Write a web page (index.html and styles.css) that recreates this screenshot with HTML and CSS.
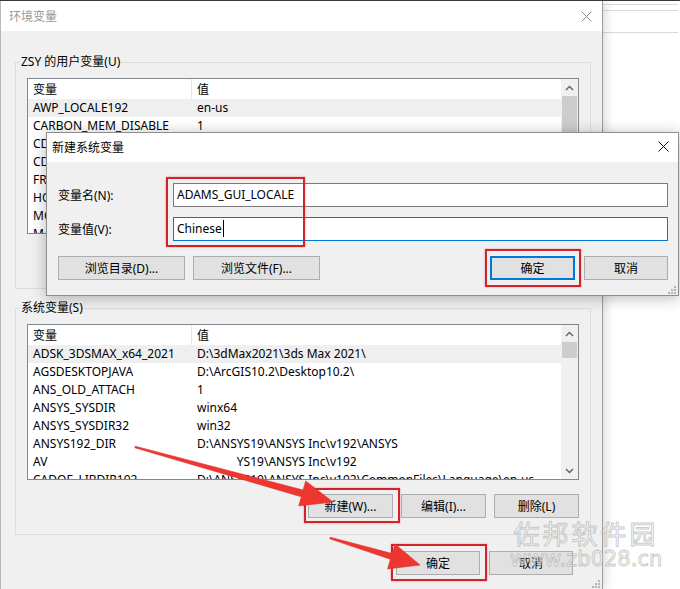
FILE: index.html
```html
<!DOCTYPE html>
<html lang="zh-CN">
<head>
    <meta charset="UTF-8">
    <meta name="viewport" content="width=device-width, initial-scale=1.0">
    <title>环境变量</title>
    <link rel="stylesheet" href="styles.css">
</head>
<body>
    <!-- Environment variables window -->
    <div class="window main-window">
        <div class="titlebar">
            <span class="title inactive">环境变量</span>
            <svg class="close-icon inactive-x" width="11" height="11" viewBox="0 0 11 11"><path d="M0.5 0.5 L10.5 10.5 M10.5 0.5 L0.5 10.5" /></svg>
        </div>
        <div class="window-body">
            <fieldset class="group">
                <legend>ZSY 的用户变量(U)</legend>
                <div class="list">
                    <div class="list-rows">
                        <div class="row head"><span class="c1">变量</span><span class="c2">值</span></div>
                        <div class="row selected"><span class="c1">AWP_LOCALE192</span><span class="c2">en-us</span></div>
                        <div class="row"><span class="c1">CARBON_MEM_DISABLE</span><span class="c2">1</span></div>
                        <div class="row"><span class="c1">CDSROOT</span><span class="c2">D:\Cadence</span></div>
                        <div class="row"><span class="c1">CDS_LIC_FILE</span><span class="c2">5280@localhost</span></div>
                        <div class="row"><span class="c1">FR_HOME</span><span class="c2">D:\FR</span></div>
                        <div class="row"><span class="c1">HOME</span><span class="c2">C:\Users\ZSY</span></div>
                        <div class="row"><span class="c1">MOZ_PLUGIN_PATH</span><span class="c2">D:\Foxit</span></div>
                        <div class="row"><span class="c1">MATLAB</span><span class="c2">D:\MATLAB</span></div>
                    </div>
                    <div class="scrollbar">
                        <div class="sb-arrow"><svg width="9" height="6" viewBox="0 0 9 6"><path d="M1 5 L4.5 1.5 L8 5" /></svg></div>
                        <div class="sb-thumb tall"></div>
                    </div>
                </div>
                <div class="btn-row">
                    <button class="btn">新建(N)...</button>
                    <button class="btn">编辑(E)...</button>
                    <button class="btn">删除(D)</button>
                </div>
            </fieldset>

            <fieldset class="group sys-group">
                <legend>系统变量(S)</legend>
                <div class="list">
                    <div class="list-rows">
                        <div class="row head"><span class="c1">变量</span><span class="c2">值</span></div>
                        <div class="row selected"><span class="c1">ADSK_3DSMAX_x64_2021</span><span class="c2">D:\3dMax2021\3ds Max 2021\</span></div>
                        <div class="row"><span class="c1">AGSDESKTOPJAVA</span><span class="c2">D:\ArcGIS10.2\Desktop10.2\</span></div>
                        <div class="row"><span class="c1">ANS_OLD_ATTACH</span><span class="c2">1</span></div>
                        <div class="row"><span class="c1">ANSYS_SYSDIR</span><span class="c2">winx64</span></div>
                        <div class="row"><span class="c1">ANSYS_SYSDIR32</span><span class="c2">win32</span></div>
                        <div class="row"><span class="c1">ANSYS192_DIR</span><span class="c2">D:\ANSYS19\ANSYS Inc\v192\ANSYS</span></div>
                        <div class="row"><span class="c1">AV<span class="erased">BS_ROOT</span></span><span class="c2"><span class="erased">D:\ANS</span>YS19\ANSYS Inc\v192</span></div>
                        <div class="row"><span class="c1">CADOE_LIBDIR192</span><span class="c2">D:\ANSYS19\ANSYS Inc\v192\CommonFiles\Language\en-us</span></div>
                    </div>
                    <div class="scrollbar">
                        <div class="sb-arrow"><svg width="9" height="6" viewBox="0 0 9 6"><path d="M1 5 L4.5 1.5 L8 5" /></svg></div>
                        <div class="sb-thumb"></div>
                        <div class="sb-fill"></div>
                        <div class="sb-arrow"><svg width="9" height="6" viewBox="0 0 9 6"><path d="M1 1 L4.5 4.5 L8 1" /></svg></div>
                    </div>
                </div>
                <div class="btn-row">
                    <button class="btn">新建(W)...</button>
                    <button class="btn">编辑(I)...</button>
                    <button class="btn">删除(L)</button>
                </div>
            </fieldset>

            <div class="btn-row footer">
                <button class="btn">确定</button>
                <button class="btn">取消</button>
            </div>
        </div>
        <svg class="grip" width="9" height="9" viewBox="0 0 9 9"><rect x="7" y="1" width="2" height="2"/><rect x="4" y="4" width="2" height="2"/><rect x="7" y="4" width="2" height="2"/><rect x="1" y="7" width="2" height="2"/><rect x="4" y="7" width="2" height="2"/><rect x="7" y="7" width="2" height="2"/></svg>
    </div>

    <!-- window behind, on the right -->
    <div class="behind">
        <div class="behind-line first"></div>
        <div class="behind-line"></div>
        <div class="behind-line last"></div>
    </div>

    <!-- New system variable dialog -->
    <div class="window dialog">
        <div class="titlebar">
            <span class="title">新建系统变量</span>
            <svg class="close-icon" width="11" height="11" viewBox="0 0 11 11"><path d="M0.5 0.5 L10.5 10.5 M10.5 0.5 L0.5 10.5" /></svg>
        </div>
        <div class="dialog-body">
            <div class="field">
                <label class="field-label">变量名(N):</label>
                <div class="text-input">ADAMS_GUI_LOCALE</div>
            </div>
            <div class="field">
                <label class="field-label">变量值(V):</label>
                <div class="text-input focused"><span class="caret">Chinese</span></div>
            </div>
            <div class="dialog-buttons">
                <button class="btn wide">浏览目录(D)...</button>
                <button class="btn wide">浏览文件(F)...</button>
                <span class="spacer"></span>
                <button class="btn default">确定</button>
                <button class="btn">取消</button>
            </div>
            <svg class="grip" width="9" height="9" viewBox="0 0 9 9"><rect x="7" y="1" width="2" height="2"/><rect x="4" y="4" width="2" height="2"/><rect x="7" y="4" width="2" height="2"/><rect x="1" y="7" width="2" height="2"/><rect x="4" y="7" width="2" height="2"/><rect x="7" y="7" width="2" height="2"/></svg>
        </div>
    </div>

    <!-- annotations -->
    <div class="mark mark-inputs"></div>
    <div class="mark mark-ok"></div>
    <div class="mark mark-new"></div>
    <div class="mark mark-final"></div>

    <svg class="arrows" width="680" height="589" viewBox="0 0 680 589">
        <polygon points="135.2,445.2 303.1,489.0 305.7,479.9 333,501 298.7,504.9 301.3,495.8 134.8,446.8" />
        <polygon points="330.2,536.2 392.2,552.5 395.0,542.9 420,564 387.6,567.9 390.4,558.3 329.8,537.8" />
    </svg>

    <div class="watermark">
        <div class="wm-name">佐邦软件园</div>
        <div class="wm-url">www.zb028.cn</div>
    </div>
</body>
</html>
```

FILE: styles.css
```css
* {
    box-sizing: border-box;
}

body {
    margin: 0;
    width: 680px;
    height: 589px;
    overflow: hidden;
    position: relative;
    display: flex;
    background: #fff;
    border-top: 1px solid #3a3a3a;
    font-family: "Noto Sans", "Noto Sans CJK SC", sans-serif;
    font-size: 12px;
    color: #000;
}

.window {
    background: #f0f0f0;
}

.titlebar {
    display: flex;
    align-items: center;
    justify-content: space-between;
    background: #fff;
}

.title.inactive {
    color: #999;
}

.close-icon path {
    stroke: #111;
    stroke-width: 1;
    fill: none;
}

.close-icon.inactive-x path {
    stroke: #8a8a8a;
}

/* main window */
.main-window {
    position: relative;
    z-index: 1;
    width: 603px;
    height: 588px;
    flex-shrink: 0;
    border-left: 1px solid #b9b9b9;
    border-right: 1px solid #9c9c9c;
    box-shadow: 2px 0 10px rgba(0, 0, 0, 0.16);
    display: flex;
    flex-direction: column;
}

.main-window .titlebar {
    height: 30px;
    padding: 0 10px 0 8px;
}

.window-body {
    flex: 1;
    padding: 23px 11px 0 14px;
}

.group {
    margin: 0;
    padding: 8px 11px 16px 11px;
    border: 1px solid #dcdcdc;
}

.group legend {
    padding: 0 1px;
    margin-left: -7px;
    line-height: 16px;
}

.sys-group {
    margin-top: 11px;
}

.list {
    display: flex;
    height: 156px;
    border: 1px solid #828790;
    background: #fff;
    overflow: hidden;
}

.list-rows {
    flex: 1;
    overflow: hidden;
}

.row {
    display: flex;
    height: 18px;
    line-height: 18px;
    white-space: nowrap;
}

.row.head {
    height: 20px;
    line-height: 21px;
}

.row.selected {
    background: #efefef;
}

.c1 {
    width: 164px;
    flex-shrink: 0;
    padding-left: 5px;
    overflow: hidden;
}

.row.head .c1 {
    border-right: 1px solid #e5e5e5;
}

.c2 {
    padding-left: 5px;
}

.erased {
    visibility: hidden;
}

.scrollbar {
    width: 17px;
    background: #f0f0f0;
    display: flex;
    flex-direction: column;
    align-items: center;
}

.sb-arrow {
    height: 17px;
    width: 17px;
    display: flex;
    align-items: center;
    justify-content: center;
}

.sb-arrow path {
    stroke: #606060;
    stroke-width: 1.4;
    fill: none;
}

.sb-thumb {
    width: 15px;
    height: 16px;
    background: #cdcdcd;
}

.sb-thumb.tall {
    height: 80px;
}

.sb-fill {
    flex: 1;
}

.btn-row {
    display: flex;
    justify-content: flex-end;
    gap: 8px;
    margin-top: 14px;
}

.btn {
    width: 85px;
    height: 24px;
    padding: 0;
    background: #e1e1e1;
    border: 1px solid #adadad;
    font-family: inherit;
    font-size: 12px;
    color: #000;
}

.btn.wide {
    width: 127px;
}

.btn.default {
    border-color: #0078d7;
    box-shadow: inset 0 0 0 1px #0078d7;
}

.footer {
    margin-top: 16px;
    margin-right: 18px;
    gap: 9px;
}

.footer .btn {
    width: 84px;
}

.grip {
    position: absolute;
    right: 2px;
    bottom: 1px;
}

.grip rect {
    fill: #b3b3b3;
}

/* window behind */
.behind {
    flex: 1;
}

.behind-line {
    height: 1px;
    margin-top: 5px;
    background: #dadada;
    margin-right: 2px;
}

.behind-line.first {
    margin-top: 3px;
}

.behind-line.last {
    margin-top: 21px;
}

/* dialog */
.dialog {
    position: absolute;
    z-index: 2;
    left: 46px;
    top: 131px;
    width: 633px;
    height: 164px;
    border: 1px solid #8e8e8e;
    box-shadow: 0 2px 14px rgba(0, 0, 0, 0.28);
    display: flex;
    flex-direction: column;
}

.dialog .titlebar {
    height: 29px;
    padding: 0 9px 2px 5px;
}

.dialog-body {
    position: relative;
    flex: 1;
    padding: 21px 10px 14px 11px;
}

.field {
    display: flex;
    align-items: center;
    margin-bottom: 10px;
}

.field-label {
    width: 115px;
    flex-shrink: 0;
}

.text-input {
    flex: 1;
    height: 24px;
    line-height: 21px;
    padding: 0 3px;
    background: #fff;
    border: 1px solid #7a7a7a;
}

.text-input.focused {
    border-color: #0078d7;
}

.caret {
    border-right: 1px solid #000;
    padding-right: 1px;
}

.dialog-buttons {
    display: flex;
    gap: 8px;
    margin-top: 15px;
}

.dialog-buttons .btn:last-child {
    margin-left: 1px;
    width: 84px;
}

.spacer {
    flex: 1;
}

/* annotations */
.mark {
    position: absolute;
    z-index: 3;
    border: 2px solid #d2232b;
    box-shadow: 0 0 2px rgba(210, 35, 43, 0.45);
}

.mark-inputs {
    left: 166px;
    top: 176px;
    width: 139px;
    height: 70px;
}

.mark-ok {
    left: 485px;
    top: 248px;
    width: 96px;
    height: 38px;
}

.mark-new {
    left: 304px;
    top: 487px;
    width: 96px;
    height: 35px;
}

.mark-final {
    left: 391px;
    top: 543px;
    width: 96px;
    height: 37px;
}

.arrows {
    position: absolute;
    z-index: 4;
    left: 0;
    top: 0;
}

.arrows polygon {
    fill: #ee3631;
    stroke: #e0302b;
    stroke-width: 0.6;
}

.watermark {
    position: absolute;
    z-index: 5;
    left: 510px;
    top: 516px;
    white-space: nowrap;
    text-align: center;
    color: rgba(255, 255, 255, 0.5);
    -webkit-text-stroke: 1px rgba(160, 160, 160, 0.55);
}

.wm-name {
    font-size: 26px;
    letter-spacing: 3px;
    line-height: 34px;
}

.wm-url {
    font-family: "DejaVu Sans", sans-serif;
    font-size: 21px;
    line-height: 22px;
    margin-top: -3px;
}
```
